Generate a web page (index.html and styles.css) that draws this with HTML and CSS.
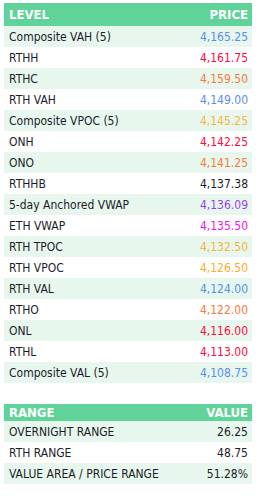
FILE: index.html
```html
<!DOCTYPE html>
<html>
<head>
<meta charset="utf-8">
<link rel="stylesheet" href="styles.css">
</head>
<body>
<table class="tbl">
  <thead>
    <tr class="head"><th class="l">LEVEL</th><th class="r">PRICE</th></tr>
  </thead>
  <tbody>
    <tr><td>Composite VAH (5)</td><td class="r c-blue">4,165.25</td></tr>
    <tr><td>RTHH</td><td class="r c-red">4,161.75</td></tr>
    <tr><td>RTHC</td><td class="r c-coral">4,159.50</td></tr>
    <tr><td>RTH VAH</td><td class="r c-blue">4,149.00</td></tr>
    <tr><td>Composite VPOC (5)</td><td class="r c-gold">4,145.25</td></tr>
    <tr><td>ONH</td><td class="r c-red">4,142.25</td></tr>
    <tr><td>ONO</td><td class="r c-coral">4,141.25</td></tr>
    <tr><td>RTHHB</td><td class="r c-black">4,137.38</td></tr>
    <tr><td>5-day Anchored VWAP</td><td class="r c-purple">4,136.09</td></tr>
    <tr><td>ETH VWAP</td><td class="r c-magenta">4,135.50</td></tr>
    <tr><td>RTH TPOC</td><td class="r c-gold">4,132.50</td></tr>
    <tr><td>RTH VPOC</td><td class="r c-orange">4,126.50</td></tr>
    <tr><td>RTH VAL</td><td class="r c-blue">4,124.00</td></tr>
    <tr><td>RTHO</td><td class="r c-coral">4,122.00</td></tr>
    <tr><td>ONL</td><td class="r c-red">4,116.00</td></tr>
    <tr><td>RTHL</td><td class="r c-red">4,113.00</td></tr>
    <tr><td>Composite VAL (5)</td><td class="r c-blue">4,108.75</td></tr>
  </tbody>
</table>
<table class="tbl second">
  <thead>
    <tr class="head"><th class="l">RANGE</th><th class="r">VALUE</th></tr>
  </thead>
  <tbody>
    <tr><td>OVERNIGHT RANGE</td><td class="r c-black">26.25</td></tr>
    <tr><td>RTH RANGE</td><td class="r c-black">48.75</td></tr>
    <tr><td>VALUE AREA / PRICE RANGE</td><td class="r c-black">51.28%</td></tr>
  </tbody>
</table>
</body>
</html>
```
FILE: styles.css
```css
html, body {
  background: #ffffff;
}
body {
  margin: 3px 7px 0 4px;
  font-family: "DejaVu Sans Condensed", "Liberation Sans Narrow", "Liberation Sans", sans-serif;
  font-size: 12px;
  color: #1c1c2a;
}
.tbl {
  width: 248px;
  border-collapse: collapse;
  border-spacing: 0;
}
.second {
  margin-top: 21px;
}
.head th {
  background: #5fd399;
  color: #ffffff;
  font-weight: bold;
  font-size: 13px;
  height: 23px;
  padding: 0 4px 0 5px;
}
.second .head th {
  height: 17px;
}
.l { text-align: left; }
.r { text-align: right; }
tbody td {
  height: 21px;
  padding: 0 4px 0 5px;
  white-space: nowrap;
}
tbody tr:nth-child(odd) td {
  background: #e7f7ed;
}
.c-blue { color: #5b8cf0; }
.c-red { color: #ff0a3c; }
.c-coral { color: #fa7a3c; }
.c-gold { color: #f7b43c; }
.c-orange { color: #ffaa1e; }
.c-purple { color: #9b3cf5; }
.c-magenta { color: #f514e6; }
.c-black { color: #1c1c2a; }
```
